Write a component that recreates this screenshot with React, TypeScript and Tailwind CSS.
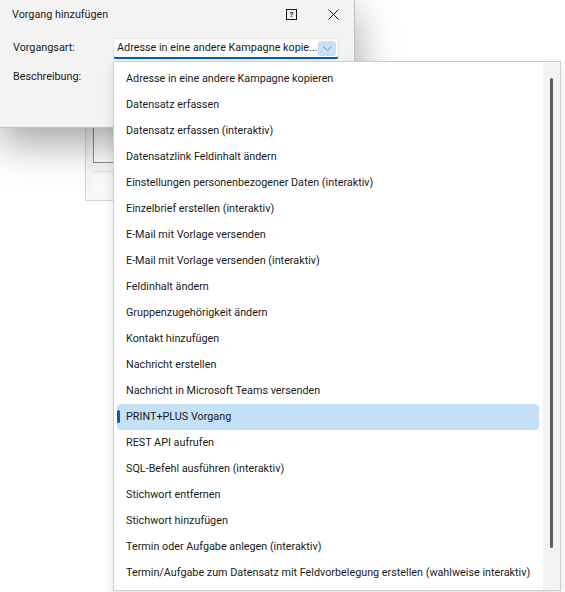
import React from 'react';

const actions = [
  'Adresse in eine andere Kampagne kopieren',
  'Datensatz erfassen',
  'Datensatz erfassen (interaktiv)',
  'Datensatzlink Feldinhalt ändern',
  'Einstellungen personenbezogener Daten (interaktiv)',
  'Einzelbrief erstellen (interaktiv)',
  'E-Mail mit Vorlage versenden',
  'E-Mail mit Vorlage versenden (interaktiv)',
  'Feldinhalt ändern',
  'Gruppenzugehörigkeit ändern',
  'Kontakt hinzufügen',
  'Nachricht erstellen',
  'Nachricht in Microsoft Teams versenden',
  'PRINT+PLUS Vorgang',
  'REST API aufrufen',
  'SQL-Befehl ausführen (interaktiv)',
  'Stichwort entfernen',
  'Stichwort hinzufügen',
  'Termin oder Aufgabe anlegen (interaktiv)',
  'Termin/Aufgabe zum Datensatz mit Feldvorbelegung erstellen (wahlweise interaktiv)',
];

const selected = 'PRINT+PLUS Vorgang';

const CloseIcon = () => (
  <svg width="11" height="11" viewBox="0 0 11 11" fill="none" stroke="#1a1a1a" strokeWidth="1">
    <path d="M0.5 0.5 L10.5 10.5 M10.5 0.5 L0.5 10.5" />
  </svg>
);

const Chevron = () => (
  <svg width="9" height="5" viewBox="0 0 9 5" fill="none" stroke="#7a8ea0" strokeWidth="1">
    <path d="M0.5 0.5 L4.5 4.5 L8.5 0.5" />
  </svg>
);

function ActionList() {
  return (
    <div className="absolute left-0 top-[23px] z-10 flex h-[530px] w-[448px] border border-[#cfcfcf] bg-white shadow-[0_4px_10px_rgba(0,0,0,0.12)]">
      <div className="flex min-w-0 flex-1 flex-col overflow-hidden pt-[4px] pl-[3px] pr-[4px]">
        {actions.map((a) => (
          <div
            key={a}
            className={
              a === selected
                ? 'relative flex h-[26px] shrink-0 items-center rounded-[4px] bg-[#c5e1f8] pl-[9px] whitespace-nowrap'
                : 'relative flex h-[26px] shrink-0 items-center pl-[9px] whitespace-nowrap'
            }
          >
            {a === selected && (
              <span className="absolute left-0 top-[6px] h-[13px] w-[3px] rounded-full bg-[#005fb8]" />
            )}
            {a}
          </div>
        ))}
      </div>
      {/* scrollbar */}
      <div className="w-[17px] shrink-0 bg-[#f3f3f3] pt-[16px]">
        <div className="ml-[7px] h-[470px] w-[3px] rounded-full bg-[#5d5d5d]" />
      </div>
    </div>
  );
}

export default function App() {
  return (
    <div
      className="relative h-[592px] w-[565px] overflow-hidden bg-white text-[10.8px] leading-[16px] text-[#1a1a1a]"
      style={{ fontFamily: 'Roboto, "Noto Sans", sans-serif' }}
    >
      {/* main window behind the dialog */}
      <div className="absolute left-[85px] top-[70px] h-[131px] w-[300px] border border-[#d6d6d6] bg-[#f7f7f7] pl-[7px] pt-[10px]">
        <div className="h-[82px] border-b border-l border-[#8a8a8a] bg-white" />
        <div className="mt-[8px] h-[22px] border-t border-[#dcdcdc] bg-[#f9f9f9]" />
      </div>

      {/* dialog */}
      <div className="absolute left-0 top-0 h-[128px] w-[355px] border-b border-r border-[#bdbdbd] bg-[#f3f3f3] shadow-[0_14px_40px_rgba(0,0,0,0.38)]">
        <div className="flex h-[29px] items-center pl-[12px]">
          <span className="flex-1">Vorgang hinzufügen</span>
          <span className="mr-[31px] flex h-[11px] w-[11px] items-center justify-center border border-[#1a1a1a] text-[8px] font-bold leading-none">
            ?
          </span>
          <span className="mr-[15px] flex">
            <CloseIcon />
          </span>
        </div>

        <div className="flex h-[21px] items-center pl-[13px] mt-[9px]">
          <span className="w-[100px] pb-[2px]">Vorgangsart:</span>
          <div className="relative">
            <div className="flex h-[21px] w-[226px] items-center rounded-[3px] border border-[#e3e3e3] border-b-2 border-b-[#005fb8] bg-white pl-[3px]">
              <span className="min-w-0 flex-1 whitespace-nowrap">
                Adresse in eine andere Kampagne kopie...
              </span>
              <span className="mr-[2px] flex h-[15px] w-[18px] shrink-0 items-center justify-center rounded-[3px] bg-[#c5e0f7]">
                <Chevron />
              </span>
            </div>
            <ActionList />
          </div>
        </div>

        <div className="pl-[13px] pt-[10px]">Beschreibung:</div>
      </div>
    </div>
  );
}
